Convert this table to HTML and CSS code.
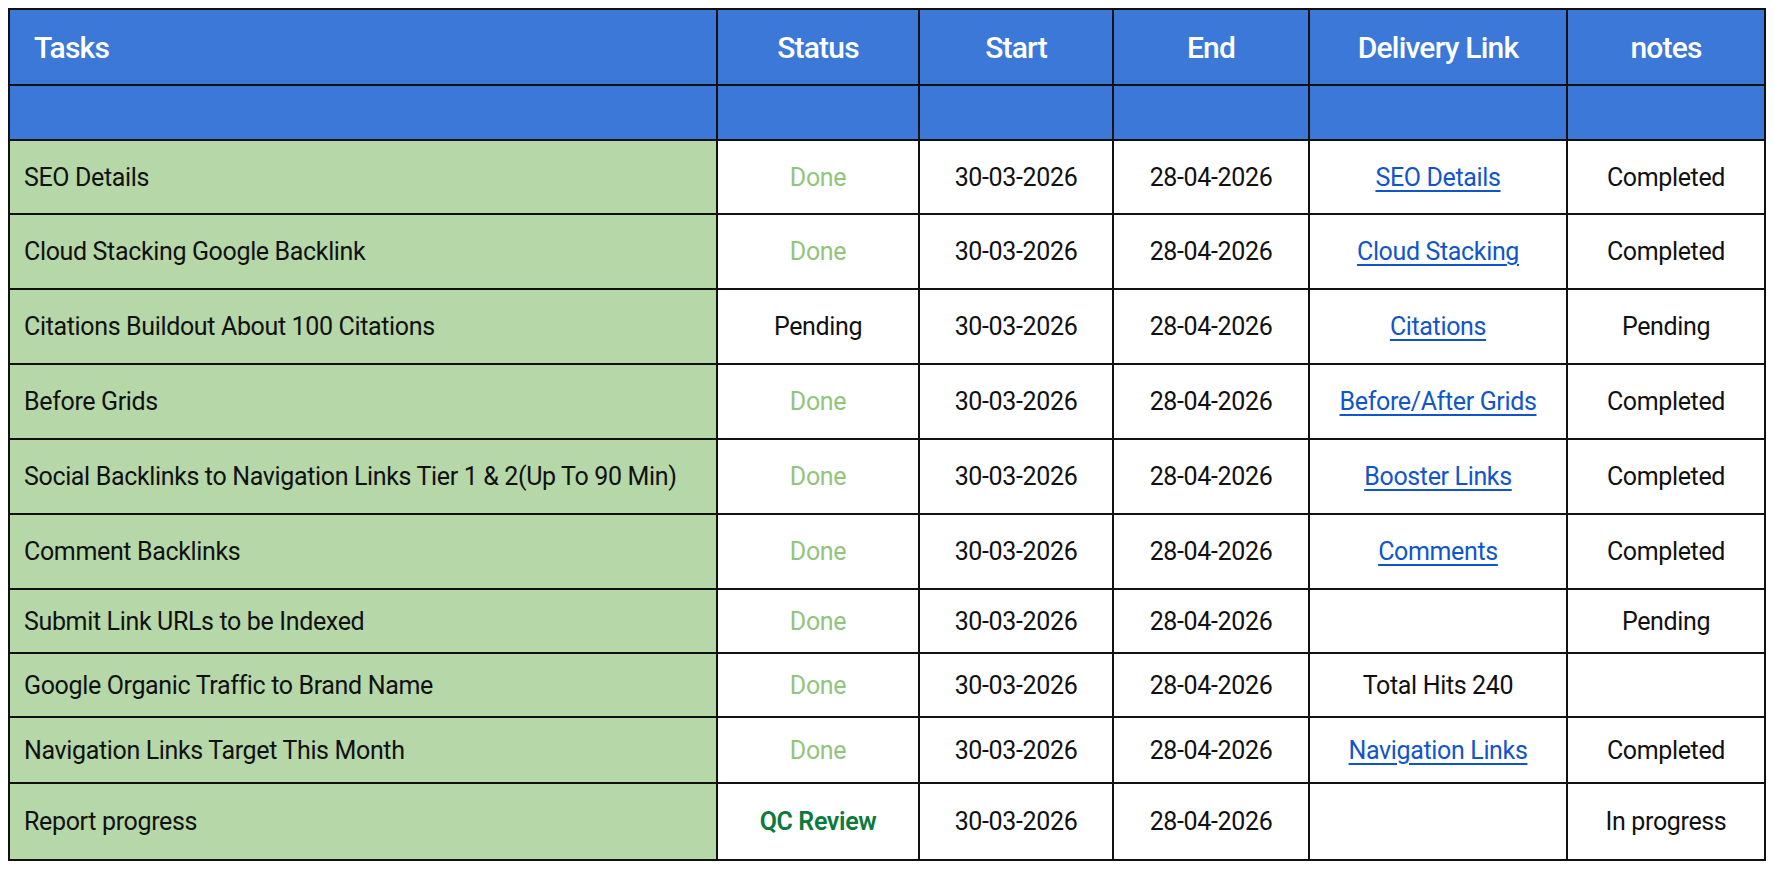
FILE: index.html
```html
<!DOCTYPE html>
<html>
<head>
<meta charset="utf-8">
<link rel="stylesheet" href="styles.css">
</head>
<body>
<table class="tracker">
  <colgroup>
    <col class="c-task"><col class="c-status"><col class="c-start"><col class="c-end"><col class="c-link"><col class="c-notes">
  </colgroup>
  <thead>
    <tr class="head">
      <th class="th-task">Tasks</th><th>Status</th><th>Start</th><th>End</th><th>Delivery Link</th><th>notes</th>
    </tr>
    <tr class="head-blank">
      <th></th><th></th><th></th><th></th><th></th><th></th>
    </tr>
  </thead>
  <tbody>
    <tr class="r74">
      <td class="task">SEO Details</td><td class="done">Done</td><td>30-03-2026</td><td>28-04-2026</td><td><a href="#">SEO Details</a></td><td>Completed</td>
    </tr>
    <tr class="r75">
      <td class="task">Cloud Stacking Google Backlink</td><td class="done">Done</td><td>30-03-2026</td><td>28-04-2026</td><td><a href="#">Cloud Stacking</a></td><td>Completed</td>
    </tr>
    <tr class="r75">
      <td class="task">Citations Buildout About 100 Citations</td><td>Pending</td><td>30-03-2026</td><td>28-04-2026</td><td><a href="#">Citations</a></td><td>Pending</td>
    </tr>
    <tr class="r75">
      <td class="task">Before Grids</td><td class="done">Done</td><td>30-03-2026</td><td>28-04-2026</td><td><a href="#">Before/After Grids</a></td><td>Completed</td>
    </tr>
    <tr class="r75">
      <td class="task">Social Backlinks to Navigation Links Tier 1 &amp; 2(Up To 90 Min)</td><td class="done">Done</td><td>30-03-2026</td><td>28-04-2026</td><td><a href="#">Booster Links</a></td><td>Completed</td>
    </tr>
    <tr class="r75">
      <td class="task">Comment Backlinks</td><td class="done">Done</td><td>30-03-2026</td><td>28-04-2026</td><td><a href="#">Comments</a></td><td>Completed</td>
    </tr>
    <tr class="r64">
      <td class="task">Submit Link URLs to be Indexed</td><td class="done">Done</td><td>30-03-2026</td><td>28-04-2026</td><td></td><td>Pending</td>
    </tr>
    <tr class="r64">
      <td class="task">Google Organic Traffic to Brand Name</td><td class="done">Done</td><td>30-03-2026</td><td>28-04-2026</td><td>Total Hits 240</td><td></td>
    </tr>
    <tr class="r66">
      <td class="task">Navigation Links Target This Month</td><td class="done">Done</td><td>30-03-2026</td><td>28-04-2026</td><td><a href="#">Navigation Links</a></td><td>Completed</td>
    </tr>
    <tr class="r77">
      <td class="task">Report progress</td><td class="qc">QC Review</td><td>30-03-2026</td><td>28-04-2026</td><td></td><td>In progress</td>
    </tr>
  </tbody>
</table>
</body>
</html>
```
FILE: styles.css
```css
html, body {
  margin: 0;
  padding: 0;
  background: #ffffff;
}
body {
  padding: 8px;
  font-family: Roboto, "Liberation Sans", sans-serif;
}
.tracker {
  border-collapse: collapse;
  table-layout: fixed;
  width: 1756px;
  color: #111111;
}
.c-task { width: 708px; }
.c-status { width: 202px; }
.c-start { width: 194px; }
.c-end { width: 196px; }
.c-link { width: 258px; }
.c-notes { width: 198px; }

.tracker th,
.tracker td {
  border: 2px solid #111111;
  padding: 0 4px;
  text-align: center;
  vertical-align: middle;
  white-space: nowrap;
}
.tracker th {
  background: #3c78d8;
  color: #ffffff;
  font-size: 30px;
  font-weight: 500;
  letter-spacing: -0.8px;
}
.tracker td {
  background: #ffffff;
  font-size: 25px;
  font-weight: 400;
  letter-spacing: -0.35px;
}
.head { height: 76px; }
.head-blank { height: 55px; }
.r74 { height: 74px; }
.r75 { height: 75px; }
.r64 { height: 64px; }
.r66 { height: 66px; }
.r77 { height: 77px; }

.tracker .th-task {
  text-align: left;
  padding-left: 24px;
}
.tracker td.task {
  background: #b6d7a8;
  text-align: left;
  padding-left: 14px;
}
.done { color: #93c47d; }
.tracker td.qc { color: #0b7a3c; font-weight: 600; }
.tracker a {
  color: #1155cc;
  text-decoration: underline;
  text-underline-offset: 4px;
  text-decoration-thickness: 2px;
}
```
